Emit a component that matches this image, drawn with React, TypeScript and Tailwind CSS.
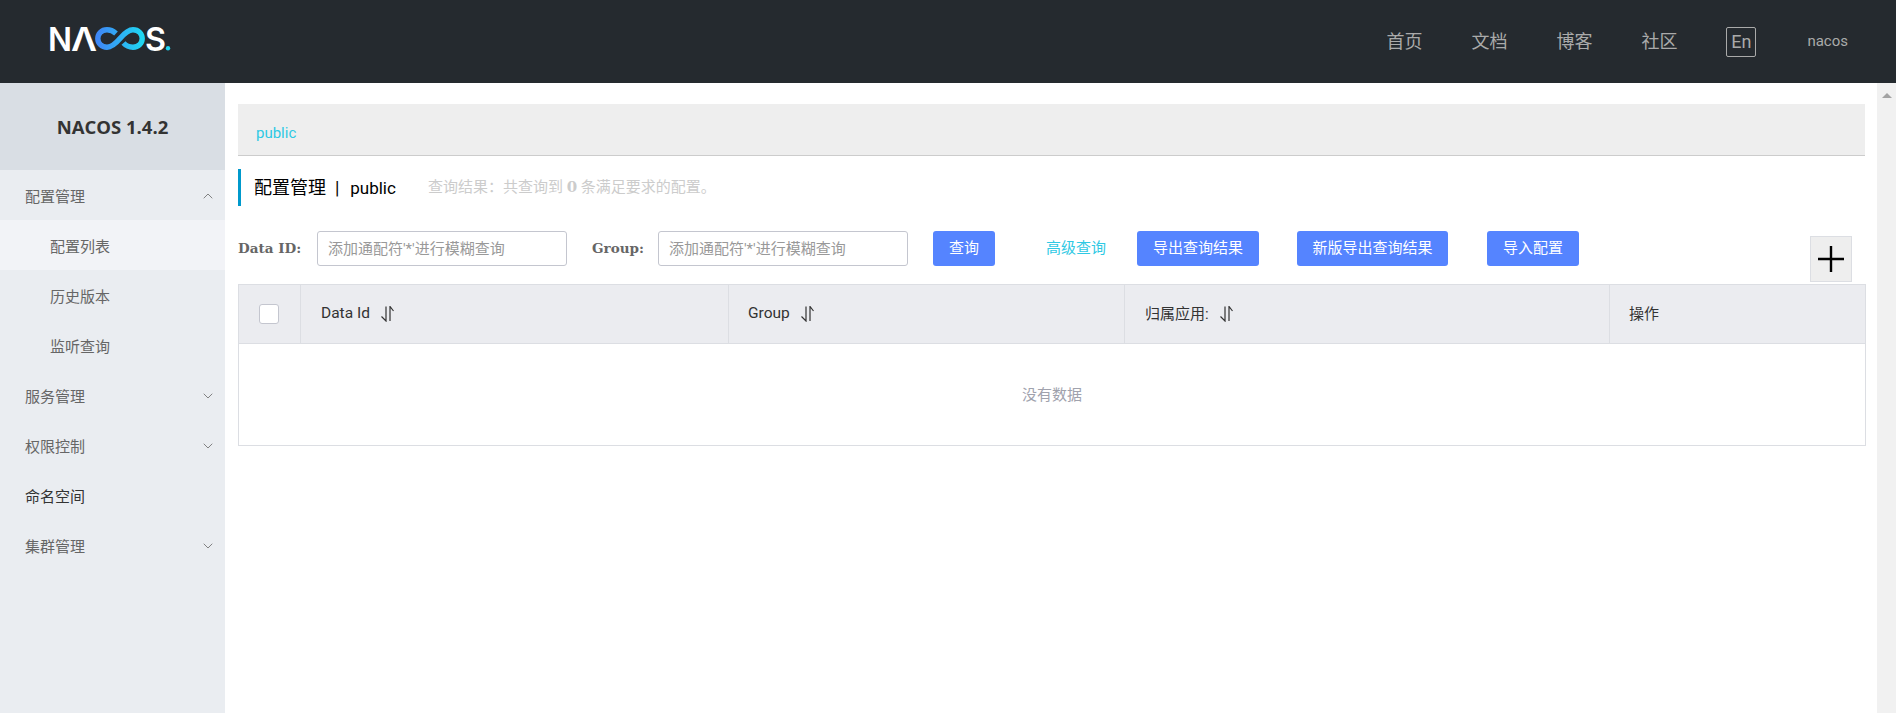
import { ChevronDown, ChevronUp } from "lucide-react";

const topLinks = ["首页", "文档", "博客", "社区"];

function Logo() {
  return (
    <svg width="130" height="41" viewBox="-4 -8 130 41" aria-label="NACOS" className="mb-[4px] block">
      <defs>
        <linearGradient id="inf" x1="0" x2="1" y1="0" y2="0">
          <stop offset="0" stopColor="#3f87f5" />
          <stop offset="1" stopColor="#1fd6f2" />
        </linearGradient>
      </defs>
      <text x="-2" y="23.5" fontFamily="Inter, sans-serif" fontWeight="600" fontSize="32" fill="#fff" textLength="24" lengthAdjust="spacingAndGlyphs">N</text>
      <text x="21" y="23.5" fontFamily="Inter, sans-serif" fontWeight="600" fontSize="32" fill="#fff" textLength="26" lengthAdjust="spacingAndGlyphs">Λ</text>
      <path
        d="M66 6.5C63 3.8 60 2.8 57 2.8 51.5 2.8 47.8 6.8 47.8 11.5 47.8 16.2 51.5 20.2 57 20.2 61 20.2 64 18.5 70 11.5 76 4.5 79 2.8 83 2.8 88.5 2.8 92.2 6.8 92.2 11.5 92.2 16.2 88.5 20.2 83 20.2 79 20.2 76 18.8 73.5 16"
        fill="none"
        stroke="url(#inf)"
        strokeWidth="5.4"
      />
      <text x="95" y="23.5" fontFamily="Inter, sans-serif" fontWeight="600" fontSize="32" fill="#fff" textLength="21" lengthAdjust="spacingAndGlyphs">S</text>
      <circle cx="118" cy="21.2" r="2.2" fill="#1fd6f2" />
    </svg>
  );
}

function SortIcon() {
  return (
    <svg width="15" height="16" viewBox="0 0 15 16" fill="none" stroke="#333" strokeWidth="1.2" className="ml-[10px] block">
      <path d="M6 0.5V15L1.5 10.5" />
      <path d="M10 15V0.5L13.5 5" />
    </svg>
  );
}

function NavItem({ label, open, closed, sub, active, dark }: { label: string; open?: boolean; closed?: boolean; sub?: boolean; active?: boolean; dark?: boolean }) {
  return (
    <div
      className={`flex h-[50px] items-center justify-between pr-[9px] pt-[5px] text-[15px] ${sub ? "pl-[50px]" : "pl-[25px]"} ${active ? "bg-[#f2f3f7]" : ""} ${dark ? "text-[#333]" : "text-[#666]"}`}
    >
      <span>{label}</span>
      {open && <ChevronUp size={16} strokeWidth={1.2} className="-mt-[4px] text-[#666]" />}
      {closed && <ChevronDown size={16} strokeWidth={1.2} className="-mt-[4px] text-[#666]" />}
    </div>
  );
}

function SearchInput() {
  return (
    <input
      placeholder="添加通配符'*'进行模糊查询"
      className="h-[35px] w-[250px] rounded-[3px] border border-[#c4c6cf] bg-white px-[10px] text-[15px] outline-none placeholder:text-[#999]"
    />
  );
}

function Btn({ label, className }: { label: string; className: string }) {
  return (
    <button className={`flex h-[35px] items-center justify-center rounded-[3px] bg-[#5584ff] text-[15px] text-white ${className}`}>
      {label}
    </button>
  );
}

const serifBold = "font-['DejaVu_Serif','Noto_Sans_CJK_SC',serif] font-bold";

export default function App() {
  return (
    <div className="flex h-[713px] flex-col overflow-hidden bg-white font-['Roboto','Noto_Sans_CJK_SC',sans-serif] text-[15px] text-[#333]">
      {/* top bar */}
      <header className="flex h-[83px] shrink-0 items-center bg-[#252a2f] pl-[46px]">
        <Logo />
        <nav className="ml-auto flex items-center text-[#aaa]">
          {topLinks.map((l) => (
            <span key={l} className="mr-[49px] text-[18px]">{l}</span>
          ))}
          <span className="mr-[51px] flex h-[30px] w-[30px] items-center justify-center rounded-[2px] border border-[#aaa] text-[18px]">En</span>
          <span className="mr-[48px] text-[15px]">nacos</span>
        </nav>
      </header>

      <div className="flex min-h-0 flex-1">
        {/* side menu */}
        <aside className="w-[225px] shrink-0 bg-[#eaedf1]">
          <div className="flex h-[87px] items-center justify-center bg-[#d9dee4] font-['Open_Sans',sans-serif] text-[18.5px] font-bold text-[#333]">NACOS 1.4.2</div>
          <NavItem label="配置管理" open />
          <NavItem label="配置列表" sub active />
          <NavItem label="历史版本" sub />
          <NavItem label="监听查询" sub />
          <NavItem label="服务管理" closed />
          <NavItem label="权限控制" closed />
          <NavItem label="命名空间" dark />
          <NavItem label="集群管理" closed />
        </aside>

        {/* page */}
        <main className="min-w-0 flex-1 pl-[13px] pr-[12px] pt-[21px]">
          <div className="flex h-[52px] items-end border-b border-[#ccc] bg-[#eee] pb-[11px] pl-[18px] text-[#2fc9e4]">public</div>

          <div className="mt-[13px] flex h-[37px] items-center border-l-[3px] border-[#09c] pl-[13px]">
            <span className="text-[18px] text-black">配置管理&nbsp;&nbsp;|&nbsp;&nbsp;<span className="ml-[2px] text-[17px]">public</span></span>
            <span className="ml-[32px] text-[#ccc]">
              查询结果：共查询到 <strong className={serifBold}>0</strong> 条满足要求的配置。
            </span>
          </div>

          <div className="mt-[25px] flex h-[53px] items-start">
            <label className={`flex h-[35px] w-[79px] items-center text-[13.5px] text-[#666] ${serifBold}`}>Data ID:</label>
            <SearchInput />
            <label className={`ml-[25px] flex h-[35px] w-[66px] items-center text-[13.5px] text-[#666] ${serifBold}`}>Group:</label>
            <SearchInput />
            <Btn label="查询" className="ml-[25px] w-[62px]" />
            <span className="ml-[51px] flex h-[35px] items-center text-[#2fc9e4]">高级查询</span>
            <Btn label="导出查询结果" className="ml-[31px] w-[122px]" />
            <Btn label="新版导出查询结果" className="ml-[38px] w-[151px]" />
            <Btn label="导入配置" className="ml-[39px] w-[92px]" />
            <button className="ml-auto mr-[13px] mt-[5px] flex h-[46px] w-[42px] items-center justify-center border border-[#dcdee3] bg-[#eee]">
              <svg width="28" height="28" viewBox="0 0 28 28" stroke="#000" strokeWidth="2.4">
                <path d="M14 1V27M1 14H27" />
              </svg>
            </button>
          </div>

          {/* table */}
          <div className="-mr-[1px] h-[162px] border border-[#dcdee3]">
            <div className="flex h-[59px] items-center border-b border-[#dcdee3] bg-[#ebecf0] text-[#333]">
              <div className="flex h-full w-[62px] items-center justify-center border-r border-[#dcdee3]">
                <span className="-ml-[1px] h-[20px] w-[20px] rounded-[3px] border border-[#c4c6cf] bg-white" />
              </div>
              <div className="flex h-full w-[428px] items-center border-r border-[#dcdee3] pl-[20px] text-[15.5px]">Data Id<SortIcon /></div>
              <div className="flex h-full w-[396px] items-center border-r border-[#dcdee3] pl-[19px] text-[15.5px]">Group<SortIcon /></div>
              <div className="flex h-full w-[485px] items-center border-r border-[#dcdee3] pl-[20px]">归属应用:<SortIcon /></div>
              <div className="flex h-full flex-1 items-center pl-[19px]">操作</div>
            </div>
            <div className="flex h-[101px] items-center justify-center pt-[1px] text-[#a0a2ad]">没有数据</div>
          </div>
        </main>

        {/* scrollbar */}
        <div className="flex w-[19px] shrink-0 justify-center bg-[#f1f1f1] pt-[10px]">
          <span className="h-0 w-0 border-x-[5px] border-b-[5px] border-x-transparent border-b-[#a3a3a3]" />
        </div>
      </div>
    </div>
  );
}
